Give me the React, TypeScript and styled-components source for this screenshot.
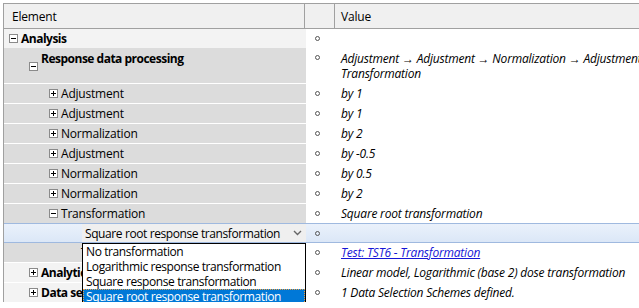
import React from "react"
import styled, { createGlobalStyle, css } from "styled-components"

const Global = createGlobalStyle`
    html, body {
        margin: 0;
        padding: 0;
        background: #fff;
        overflow: hidden;
    }
    body {
        font-family: 'Open Sans', 'Noto Sans', sans-serif;
        font-size: 12px;
        color: #000;
    }
`

const Frame = styled.div`
    padding: 3px 0 0 3px;
    width: 760px;
`

const Grid = styled.div`
    position: relative;
    border-left: 1px solid #a0a0a0;
    border-top: 1px solid #a0a0a0;
`

const HeaderRow = styled.div`
    display: grid;
    grid-template-columns: 301px 30px 1fr;
    height: 24px;
    background: #f0f0f0;
    border-bottom: 1px solid #a0a0a0;
`

const HeaderCell = styled.div`
    display: flex;
    align-items: center;
    padding-left: 8px;
    border-right: 1px solid #a0a0a0;
    letter-spacing: -0.2px;
    &:last-child {
        border-right: none;
        padding-left: 6px;
    }
`

type Tone = "light" | "gray" | "edit"

const Row = styled.div<{ $tall?: boolean; $tone: Tone; $gap?: boolean }>`
    display: grid;
    grid-template-columns: 302px 30px 1fr;
    height: ${p => (p.$tall ? 35 : 19)}px;
    border-bottom: ${p => (p.$gap ? "1px solid #fff" : "none")};
    ${p =>
        p.$tone === "edit" &&
        css`
            height: 18px;
            border-top: 1px solid #9fb9df;
            border-bottom: 1px solid #9fb9df;
            background: linear-gradient(#eaf1fb, #dbe7f7);
        `}
`

const ElementCell = styled.div<{ $tone: Tone; $level: number; $tall?: boolean }>`
    position: relative;
    display: flex;
    align-items: flex-start;
    padding-left: ${p => p.$level * 20 - 3}px;
    padding-top: ${p => (p.$tall ? 1 : 0)}px;
    line-height: 19px;
    background: ${p =>
        p.$tone === "light" ? "#f3f3f3" : p.$tone === "gray" ? "#dcdcdc" : "transparent"};
    white-space: nowrap;
    overflow: hidden;
`

const Label = styled.span<{ $bold?: boolean }>`
    font-weight: ${p => (p.$bold ? 700 : 400)};
    letter-spacing: ${p => (p.$bold ? "-0.5px" : "-0.2px")};
`

const Toggle = styled.span<{ $tall?: boolean }>`
    position: absolute;
    top: ${p => (p.$tall ? 14 : 5)}px;
    width: 7px;
    height: 7px;
    border: 1px solid #8a8a8a;
    background: #fff;
    margin-left: -12px;
    &::before {
        content: '';
        position: absolute;
        left: 1px;
        top: 3px;
        width: 5px;
        height: 1px;
        background: #000;
    }
`

const PlusToggle = styled(Toggle)`
    &::after {
        content: '';
        position: absolute;
        left: 3px;
        top: 1px;
        width: 1px;
        height: 5px;
        background: #000;
    }
`

const BulletCell = styled.div`
    position: relative;
`

const Bullet = styled.span`
    position: absolute;
    left: 9px;
    top: 7px;
    width: 3px;
    height: 3px;
    border: 1px solid #555;
    border-radius: 50%;
`

const ValueCell = styled.div<{ $tall?: boolean }>`
    padding-left: 5px;
    font-style: italic;
    line-height: 15px;
    padding-top: ${p => (p.$tall ? 3 : 2)}px;
    white-space: nowrap;
    letter-spacing: -0.2px;
`

const Link = styled.a`
    color: #1515d6;
    text-decoration: underline;
`

const Combo = styled.div`
    position: absolute;
    left: 78px;
    top: 0;
    width: 224px;
    height: 18px;
    display: flex;
    align-items: center;
    justify-content: space-between;
    background: #efefef;
    padding-left: 3px;
    box-sizing: border-box;
    letter-spacing: -0.4px;
`

const Chevron = styled.span`
    display: flex;
    align-items: center;
    justify-content: center;
    width: 18px;
    height: 18px;
`

const DropList = styled.ul`
    position: absolute;
    left: 78px;
    top: 239px;
    width: 224px;
    margin: 0;
    padding: 0;
    list-style: none;
    background: #fff;
    border: 1px solid #000;
    box-sizing: border-box;
    z-index: 2;
`

const DropItem = styled.li<{ $active?: boolean }>`
    height: 15px;
    line-height: 15px;
    padding-left: 3px;
    letter-spacing: -0.4px;
    white-space: nowrap;
    box-sizing: border-box;
    ${p =>
        p.$active &&
        css`
            background: #0078d7;
            color: #fff;
            outline: 1px dotted #f0a040;
            outline-offset: -1px;
        `}
`

interface Item {
    label: string
    level: number
    bold?: boolean
    toggle?: "plus" | "minus"
    tone: Tone
    tall?: boolean
    value?: React.ReactNode
    gap?: boolean
}

const items: Item[] = [
    { label: "Analysis", level: 1, bold: true, toggle: "minus", tone: "light" },
    {
        label: "Response data processing",
        level: 2,
        bold: true,
        toggle: "minus",
        tone: "gray",
        tall: true,
        gap: true,
        value: (
            <>
                Adjustment → Adjustment → Normalization → Adjustment →
                <br />
                Transformation
            </>
        ),
    },
    { label: "Adjustment", level: 3, toggle: "plus", tone: "gray", gap: true, value: "by 1" },
    { label: "Adjustment", level: 3, toggle: "plus", tone: "gray", gap: true, value: "by 1" },
    { label: "Normalization", level: 3, toggle: "plus", tone: "gray", gap: true, value: "by 2" },
    { label: "Adjustment", level: 3, toggle: "plus", tone: "gray", gap: true, value: "by -0.5" },
    { label: "Normalization", level: 3, toggle: "plus", tone: "gray", gap: true, value: "by 0.5" },
    { label: "Normalization", level: 3, toggle: "plus", tone: "gray", gap: true, value: "by 2" },
    { label: "Transformation", level: 3, toggle: "minus", tone: "gray", value: "Square root transformation" },
    { label: "", level: 4, tone: "edit" },
    {
        label: "Test",
        level: 4,
        tone: "gray",
        gap: true,
        value: <Link href="#">Test: TST6 - Transformation</Link>,
    },
    {
        label: "Analytical model",
        level: 2,
        bold: true,
        toggle: "plus",
        tone: "light",
        gap: true,
        value: "Linear model, Logarithmic (base 2) dose transformation",
    },
    {
        label: "Data selection",
        level: 2,
        bold: true,
        toggle: "plus",
        tone: "light",
        value: "1 Data Selection Schemes defined.",
    },
]

const options = [
    "No transformation",
    "Logarithmic response transformation",
    "Square response transformation",
    "Square root response transformation",
]

const App = () => {
    return (
        <Frame>
            <Global />
            <Grid>
                <HeaderRow>
                    <HeaderCell>Element</HeaderCell>
                    <HeaderCell />
                    <HeaderCell>Value</HeaderCell>
                </HeaderRow>
                {items.map((it, i) => (
                    <Row key={i} $tall={it.tall} $tone={it.tone} $gap={it.gap}>
                        <ElementCell $tone={it.tone} $level={it.level} $tall={it.tall}>
                            {it.toggle === "minus" && <Toggle $tall={it.tall} />}
                            {it.toggle === "plus" && <PlusToggle />}
                            {it.tone === "edit" ? (
                                <Combo>
                                    <span>Square root response transformation</span>
                                    <Chevron>
                                        <svg width="9" height="6" viewBox="0 0 9 6">
                                            <path d="M1 1 L4.5 4.5 L8 1" fill="none" stroke="#666" strokeWidth="1.4" />
                                        </svg>
                                    </Chevron>
                                </Combo>
                            ) : (
                                <Label $bold={it.bold}>{it.label}</Label>
                            )}
                        </ElementCell>
                        <BulletCell>
                            <Bullet />
                        </BulletCell>
                        <ValueCell $tall={it.tall}>{it.value}</ValueCell>
                    </Row>
                ))}
                <DropList>
                    {options.map((o, i) => (
                        <DropItem key={o} $active={i === 3}>
                            {o}
                        </DropItem>
                    ))}
                </DropList>
            </Grid>
        </Frame>
    )
}

export default App
